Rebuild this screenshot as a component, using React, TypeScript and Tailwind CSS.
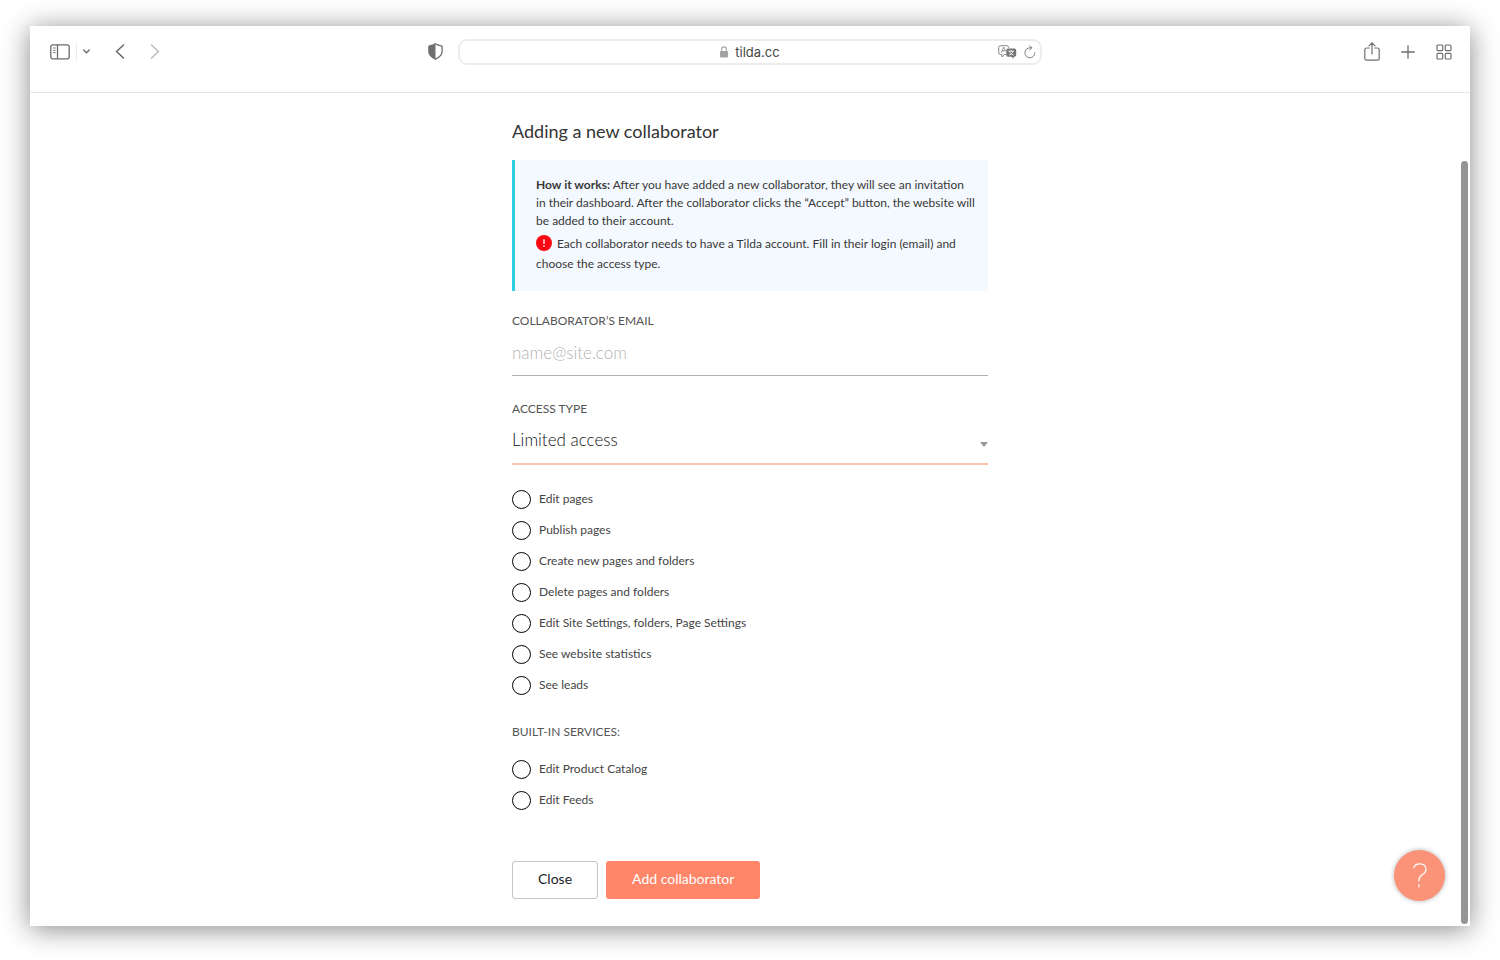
import { useState } from "react";

const pagePermissions = [
  "Edit pages",
  "Publish pages",
  "Create new pages and folders",
  "Delete pages and folders",
  "Edit Site Settings, folders, Page Settings",
  "See website statistics",
  "See leads",
];

const servicePermissions = ["Edit Product Catalog", "Edit Feeds"];

function SidebarIcon() {
  return (
    <svg width="20" height="16" viewBox="0 0 20 16" fill="none" stroke="#6b6b6b" strokeWidth="1.3">
      <rect x="0.8" y="0.8" width="18.4" height="14" rx="2" />
      <path d="M7.5 1v13.6" />
      <path d="M3 4h2.6M3 6.3h2.6M3 8.6h2.6" strokeWidth="0.9" />
    </svg>
  );
}

function ShieldIcon() {
  return (
    <svg width="15" height="17" viewBox="0 0 15 17" fill="none">
      <path
        d="M7.5.8c1.9 1.3 3.9 1.8 6 2.1.4.1.6.3.6.7v5.2c0 3.4-3 5.6-6.6 7.400C3.900 14.400.9 12.200.9 8.800V3.600c0-.4.2-.6.6-.7 2.100-.3 4.100-.8 6-2.100z"
        stroke="#6f6f6f"
        strokeWidth="1.3"
      />
      <path d="M7.5.8v15.400C3.900 14.400.9 12.200.9 8.800V3.600c0-.4.2-.6.6-.7 2.100-.3 4.100-.8 6-2.100z" fill="#6f6f6f" />
    </svg>
  );
}

function LockIcon() {
  return (
    <svg width="8" height="12" viewBox="0 0 8 12" fill="none">
      <rect x="0" y="5" width="8" height="6.500" rx="1" fill="#a3a3a3" />
      <path d="M1.700 5.500V3.200a2.300 2.300 0 0 1 4.600 0v2.300" stroke="#a3a3a3" strokeWidth="1.100" />
    </svg>
  );
}

function TranslateIcon() {
  return (
    <svg width="19" height="14" viewBox="0 0 19 14" fill="none">
      <path
        d="M8 9.500H6.300L4 12V9.500H2.500A1.800 1.800 0 0 1 .7 7.700V2.500A1.800 1.800 0 0 1 2.500.7h6.300a1.800 1.800 0 0 1 1.800 1.800V3"
        stroke="#858585"
        strokeWidth="1"
      />
      <path d="M3.300 7.500 5.700 2.200 7.700 6.500M4.200 5.800h2.900" stroke="#858585" strokeWidth="0.900" />
      <path d="M10 3.500h6.500A1.700 1.700 0 0 1 18.200 5.200v4.900a1.700 1.700 0 0 1-1.700 1.700h-.8v2L13.500 11.800H10a1.700 1.700 0 0 1-1.700-1.700V5.200A1.700 1.700 0 0 1 10 3.500z" fill="#757575" />
      <path d="M10.500 6.200h5.500M13.250 5v1.200M11.500 6.400c.5 1.700 2 3 4 3.600M15 6.400c-.5 1.700-2 3-4 3.600" stroke="#fff" strokeWidth="0.900" />
    </svg>
  );
}

function ReloadIcon() {
  return (
    <svg width="12" height="14" viewBox="0 0 12 14" fill="none" stroke="#7d7d7d" strokeWidth="1" strokeLinecap="round" strokeLinejoin="round">
      <path d="M10.900 7.800A5 5 0 1 1 6 2.800h1.700" />
      <path d="M5.700.7 7.900 2.800 5.700 5" />
    </svg>
  );
}

function ShareIcon() {
  return (
    <svg width="16" height="19" viewBox="0 0 16 19" fill="none" stroke="#6f6f6f" strokeWidth="1.200" strokeLinecap="round" strokeLinejoin="round">
      <path d="M5.200 6H2.700A1.900 1.900 0 0 0 .8 7.900v8.300a1.900 1.900 0 0 0 1.900 1.900h10.600a1.900 1.900 0 0 0 1.900-1.900V7.900A1.900 1.900 0 0 0 13.300 6h-2.500" />
      <path d="M8 12V1M5 3.800 8 .8l3 3" />
    </svg>
  );
}

function PlusIcon() {
  return (
    <svg width="14" height="14" viewBox="0 0 14 14" stroke="#6f6f6f" strokeWidth="1.300" strokeLinecap="round">
      <path d="M7 .7v12.600M.7 7h12.600" />
    </svg>
  );
}

function GridIcon() {
  return (
    <svg width="16" height="16" viewBox="0 0 16 16" fill="none" stroke="#6f6f6f" strokeWidth="1.200">
      <rect x="1" y="1" width="5.700" height="5.700" rx="1" />
      <rect x="9.300" y="1" width="5.700" height="5.700" rx="1" />
      <rect x="1" y="9.300" width="5.700" height="5.700" rx="1" />
      <rect x="9.300" y="9.300" width="5.700" height="5.700" rx="1" />
    </svg>
  );
}

function BrowserBar() {
  return (
    <header className="grid h-[67px] grid-cols-[1fr_minmax(0,584px)_1fr] border-b border-[#e4e4e4] pt-[13px]">
      <div className="flex h-[25px] items-center pr-[15px] pl-5">
        <button aria-label="Toggle sidebar">
          <SidebarIcon />
        </button>
        <span className="ml-1.5 h-[18px] w-px bg-[#ececec]" />
        <button aria-label="Tab groups" className="ml-1.5">
          <svg width="7" height="5" viewBox="0 0 7 5" fill="none" stroke="#707070" strokeWidth="1.400" strokeLinecap="round">
            <path d="M.7 1 3.500 3.800 6.300 1" />
          </svg>
        </button>
        <button aria-label="Back" className="ml-[25px]">
          <svg width="10" height="15" viewBox="0 0 10 15" fill="none" stroke="#666" strokeWidth="1.500" strokeLinecap="round" strokeLinejoin="round">
            <path d="M8.500 1 1.500 7.500l7 6.500" />
          </svg>
        </button>
        <button aria-label="Forward" className="ml-[25px]">
          <svg width="10" height="15" viewBox="0 0 10 15" fill="none" stroke="#b9b9b9" strokeWidth="1.500" strokeLinecap="round" strokeLinejoin="round">
            <path d="M1.500 1l7 6.500-7 6.500" />
          </svg>
        </button>
        <button aria-label="Privacy report" className="ml-auto">
          <ShieldIcon />
        </button>
      </div>
      <div className="grid h-[26px] min-w-0 grid-cols-[1fr_auto_1fr] items-center rounded-[9px] border-2 border-[#ededed] px-1">
        <span />
        <span className="flex items-center gap-[7px] font-['Inter',sans-serif] text-[13px] leading-4 text-[#464646]">
          <LockIcon />
          tilda.cc
        </span>
        <span className="flex items-center justify-end gap-[7px]">
          <button aria-label="Translate">
            <TranslateIcon />
          </button>
          <button aria-label="Reload">
            <ReloadIcon />
          </button>
        </span>
      </div>
      <div className="flex h-[25px] items-center justify-end gap-[21px] pr-[18px]">
        <button aria-label="Share">
          <ShareIcon />
        </button>
        <button aria-label="New tab">
          <PlusIcon />
        </button>
        <button aria-label="Tab overview">
          <GridIcon />
        </button>
      </div>
    </header>
  );
}

function Permission({ label }: { label: string }) {
  return (
    <li>
      <label className="flex h-5 items-center gap-2 text-xs text-[#444]">
        <input type="checkbox" className="size-[19px] shrink-0 appearance-none rounded-full border border-black checked:bg-black" />
        {label}
      </label>
    </li>
  );
}

function PermissionList({ items }: { items: string[] }) {
  return (
    <ul className="flex flex-col gap-[11px]">
      {items.map((item) => (
        <Permission key={item} label={item} />
      ))}
    </ul>
  );
}

export default function App() {
  const [email, setEmail] = useState("");

  return (
    <div className="flex min-h-screen flex-col bg-white px-[30px] pt-[26px] pb-[34px] font-['Lato',sans-serif]">
      <div className="relative flex flex-1 flex-col bg-white shadow-[0_3px_26px_rgba(0,0,0,0.47)]">
        <BrowserBar />
        <main className="mx-auto w-full max-w-[476px] pt-[26px] pb-[26px]">
          <h1 className="text-lg leading-6 text-[#333]">Adding a new collaborator</h1>

          <section className="mt-[17px] border-l-3 border-[#2bcfe0] bg-[#f4f9ff] pt-4 pr-2.5 pb-[17px] pl-[21px] text-xs leading-[18px] text-[#383838]">
            <p>
              <strong>How it works:</strong> After you have added a new collaborator, they will see an invitation
              in&nbsp;their dashboard. After the collaborator clicks the “Accept” button, the website will be added to
              their account.
            </p>
            <p className="mt-1 leading-5">
              <svg width="16" height="16" viewBox="0 0 16 16" className="mr-[5px] inline-block align-[-3px]">
                <circle cx="8" cy="8" r="8" fill="#fb0712" />
                <path d="M8 4.300v4.700" stroke="#fff" strokeWidth="1.300" />
                <circle cx="8" cy="11" r="0.850" fill="#fff" />
              </svg>
              Each collaborator needs to have a Tilda account. Fill in their login (email) and choose the access type.
            </p>
          </section>

          <form onSubmit={(event) => event.preventDefault()}>
            <div className="mt-[22px] flex flex-col">
              <label htmlFor="email" className="text-xs leading-4 text-[#555]">
                COLLABORATOR’S EMAIL
              </label>
              <input
                id="email"
                type="email"
                placeholder="name@site.com"
                value={email}
                onChange={(event) => setEmail(event.target.value)}
                className="h-[47px] border-b border-[#b0b0b0] text-[17px] font-light text-[#222] outline-none placeholder:text-[#b3b3b3]"
              />
            </div>

            <div className="mt-[25px] flex flex-col">
              <label htmlFor="access" className="text-xs leading-4 text-[#555]">
                ACCESS TYPE
              </label>
              <div className="relative">
                <select
                  id="access"
                  defaultValue="limited"
                  className="h-12 w-full appearance-none border-b-2 border-[#ffc0b2] text-[17px] font-light text-[#111] outline-none"
                >
                  <option value="limited">Limited access</option>
                  <option value="full">Full access</option>
                </select>
                <svg width="8" height="5" viewBox="0 0 8 5" className="pointer-events-none absolute right-0 bottom-[18px]">
                  <path d="M0 0h8L4 5z" fill="#999" />
                </svg>
              </div>
            </div>

            <div className="mt-6">
              <PermissionList items={pagePermissions} />
            </div>

            <h2 className="mt-[29px] mb-[19px] text-xs leading-4 text-[#555]">BUILT-IN SERVICES:</h2>
            <PermissionList items={servicePermissions} />

            <div className="mt-[51px] flex gap-2">
              <button type="button" className="h-[38px] rounded-[3px] border border-[#c4c4c4] px-[25px] pb-0.5 text-sm text-[#222]">
                Close
              </button>
              <button type="submit" className="h-[38px] rounded-[3px] bg-[#ff8669] px-[26px] pb-0.5 text-sm text-white">
                Add collaborator
              </button>
            </div>
          </form>
        </main>

        <button
          aria-label="Help"
          className="absolute right-[25px] bottom-[25px] flex size-[51px] items-center justify-center rounded-full bg-[#fb9379] shadow-[0_0_5px_rgba(0,0,0,0.3)]"
        >
          <svg width="14" height="25" viewBox="0 0 14 25" fill="none" stroke="#fff" strokeWidth="1.200" strokeLinecap="round">
            <path d="M.8 4.800C1.500 2 3.800.8 6.900.8c3.700 0 6.100 2 6.100 5.400 0 2.500-1.300 4-3.400 5.300-2.400 1.500-3.700 2.800-3.700 5.200v1.300" />
            <path d="M5.900 21.800v2" />
          </svg>
        </button>
        <div className="absolute top-[135px] right-0.5 bottom-0.5 w-[7px] rounded-full bg-[#959595]" />
      </div>
    </div>
  );
}
